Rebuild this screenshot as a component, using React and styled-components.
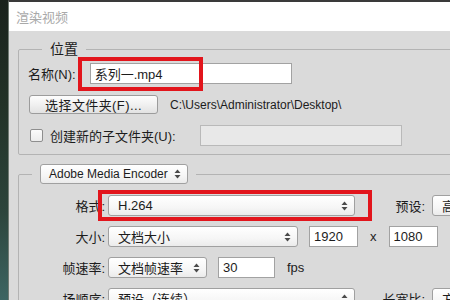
import React from 'react'
import styled, { createGlobalStyle } from 'styled-components'

const GlobalStyle = createGlobalStyle`
	html, body {
		margin: 0;
		padding: 0;
		width: 450px;
		height: 300px;
		overflow: hidden;
	}
	body {
		font-family: "Liberation Sans", "Noto Sans CJK SC", sans-serif;
		font-size: 13px;
		color: #1c1c1c;
	}
`

const Screen = styled.div`
	display: flex;
	width: 450px;
	height: 300px;
	overflow: hidden;
	background: #1d271f;
`

const Desktop = styled.div`
	flex: none;
	width: 8px;
	background: linear-gradient(180deg, #1a221c 0%, #223227 35%, #2c443b 70%, #3d6562 100%);
`

const Dialog = styled.div`
	flex: none;
	width: 470px;
	display: flex;
	flex-direction: column;
	border-top: 2px solid #3a3a3a;
	border-left: 1px solid #6f7a72;
	background: #dadada;
`

const TitleBar = styled.div`
	height: 29px;
	flex: none;
	display: flex;
	align-items: center;
	padding-left: 7px;
	background: #fff;
	color: #a9a9a9;
	font-size: 13px;
`

const Body = styled.div`
	padding: 9px 0 0 9px;
	display: flex;
	flex-direction: column;
`

const Group = styled.fieldset`
	margin: ${p => p.$gap || 0}px 0 0 0;
	padding: ${p => p.$pad || '5px 0 8px 9px'};
	border: 1px solid #b3b3b3;
	border-radius: 2px;
	min-width: 0;
	display: flex;
	flex-direction: column;
	gap: ${p => p.$rowGap || 10}px;
`

const Legend = styled.legend`
	margin-left: 14px;
	padding: 0 8px;
	font-size: 14px;
	line-height: 18px;
`

const SelectLegend = styled.legend`
	margin-left: 13px;
	padding: 0 8px;
	line-height: 0;
`

const Row = styled.div`
	display: flex;
	align-items: center;
	height: 21px;
	white-space: nowrap;
`

const Label = styled.span`
	flex: none;
	width: ${p => p.$w}px;
	margin-right: ${p => p.$mr || 0}px;
	text-align: ${p => p.$align || 'left'};
`

const Field = styled.div`
	position: relative;
	flex: none;
	box-sizing: border-box;
	width: ${p => p.$w}px;
	height: 21px;
	margin-left: ${p => p.$ml || 0}px;
	padding-left: 4px;
	display: flex;
	align-items: center;
	background: ${p => (p.$disabled ? '#e8e8e8' : '#fff')};
	border: 1px solid ${p => (p.$disabled ? '#b9b9b9' : '#a2a2a2')};
	font-size: 13px;
`

const Select = styled.div`
	position: relative;
	flex: none;
	box-sizing: border-box;
	width: ${p => p.$w}px;
	height: ${p => p.$h || 21}px;
	margin-left: ${p => p.$ml || 0}px;
	padding: 0 18px 0 ${p => p.$pl || 9}px;
	display: flex;
	align-items: center;
	background: linear-gradient(180deg, #ffffff 0%, #f6f6f6 60%, #ebebeb 100%);
	border: 1px solid #a0a0a0;
	border-radius: 3px;
	line-height: normal;
	font-size: ${p => p.$fs || 13}px;
	overflow: hidden;
	white-space: nowrap;
`

const Arrows = styled.svg`
	position: absolute;
	right: 6px;
	top: 50%;
	margin-top: -5px;
`

const Marked = styled.span`
	position: relative;
	flex: none;
	display: flex;
`

const Button = styled.div`
	flex: none;
	box-sizing: border-box;
	width: 129px;
	height: 19px;
	margin-left: 1px;
	display: flex;
	align-items: center;
	justify-content: center;
	background: linear-gradient(180deg, #fdfdfd 0%, #efefef 55%, #e2e2e2 100%);
	border: 1px solid #9c9c9c;
	border-radius: 3px;
	letter-spacing: 0.4px;
`

const Path = styled.span`
	margin-left: 12px;
	font-size: 12px;
`

const Check = styled.span`
	flex: none;
	box-sizing: border-box;
	width: 13px;
	height: 13px;
	margin: 0 7px 0 2px;
	background: linear-gradient(180deg, #fbfbfb, #ececec);
	border: 1px solid #8e8e8e;
	border-radius: 2px;
`

const Highlight = styled.span`
	position: absolute;
	left: ${p => p.$l}px;
	top: ${p => p.$t}px;
	width: ${p => p.$w}px;
	height: ${p => p.$h}px;
	box-sizing: border-box;
	border: 4px solid #e2151c;
	pointer-events: none;
`

const Unit = styled.span`
	margin-left: ${p => p.$ml}px;
	font-size: 13px;
`

const UpDown = () => (
	<Arrows width='7' height='10' viewBox='0 0 7 10'>
		<path d='M3.5 0.5 L6.5 4 L0.5 4 Z' fill='#4a4a4a' />
		<path d='M3.5 9.5 L6.5 6 L0.5 6 Z' fill='#4a4a4a' />
	</Arrows>
)

const Dropdown = ({ children, ...rest }) => (
	<Select {...rest}>
		{children}
		<UpDown />
	</Select>
)

export default function App() {
	return (
		<Screen>
			<GlobalStyle />
			<Desktop />
			<Dialog>
				<TitleBar>渲染视频</TitleBar>
				<Body>
					<Group>
						<Legend>位置</Legend>
						<Row>
							<Label>名称(N):</Label>
							<Field $w={202} $ml={14}>
								系列一.mp4
								<Highlight $l={-13} $t={-7} $w={125} $h={34} />
							</Field>
						</Row>
						<Row>
							<Button>选择文件夹(F)...</Button>
							<Path>C:\Users\Administrator\Desktop\</Path>
						</Row>
						<Row>
							<Check />
							<Label $w={150}>创建新的子文件夹(U):</Label>
							<Field $w={202} $disabled />
						</Row>
					</Group>
					<Group $gap={9} $pad='11px 0 0 0'>
						<SelectLegend>
							<Dropdown $w={148} $h={20} $fs={12} $pl={8}>Adobe Media Encoder</Dropdown>
						</SelectLegend>
						<Row>
							<Label $w={86} $mr={3} $align='right'>格式:</Label>
							<Marked>
								<Dropdown $w={247}>H.264</Dropdown>
								<Highlight $l={-10} $t={-5} $w={274} $h={31} />
							</Marked>
							<Label $w={70} $mr={7} $align='right'>预设:</Label>
							<Dropdown $w={60}>高</Dropdown>
						</Row>
						<Row>
							<Label $w={86} $mr={3} $align='right'>大小:</Label>
							<Dropdown $w={190}>文档大小</Dropdown>
							<Field $w={49} $ml={11}>1920</Field>
							<Unit $ml={12}>x</Unit>
							<Field $w={49} $ml={12}>1080</Field>
						</Row>
						<Row>
							<Label $w={86} $mr={3} $align='right'>帧速率:</Label>
							<Dropdown $w={99}>文档帧速率</Dropdown>
							<Field $w={57} $ml={11}>30</Field>
							<Unit $ml={12}>fps</Unit>
						</Row>
						<Row>
							<Label $w={86} $mr={3} $align='right'>场顺序:</Label>
							<Dropdown $w={247}>预设（连续）</Dropdown>
							<Label $w={70} $mr={7} $align='right'>长宽比:</Label>
							<Dropdown $w={60}>方</Dropdown>
						</Row>
					</Group>
				</Body>
			</Dialog>
		</Screen>
	)
}
